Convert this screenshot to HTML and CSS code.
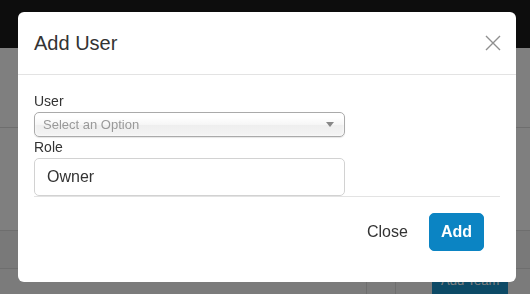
FILE: index.html
```html
<!DOCTYPE html>
<html lang="en">
<head>
<meta charset="utf-8">
<title>Add User</title>
<link rel="stylesheet" href="styles.css">
</head>
<body>
<div class="page">
  <header class="navbar"></header>
  <section class="band band-top"></section>
  <section class="band band-mid"></section>
  <section class="band band-sub"></section>
  <section class="band band-table">
    <div class="cell cell-wide"></div>
    <div class="cell cell-narrow"></div>
    <div class="cell cell-action">
      <button class="btn-team" type="button">Add Team</button>
    </div>
  </section>
</div>

<div class="backdrop"></div>

<div class="modal" role="dialog" aria-labelledby="modal-title">
  <div class="modal-header">
    <h5 class="modal-title" id="modal-title">Add User</h5>
    <button class="modal-close" type="button" aria-label="Close">
      <svg viewBox="0 0 16 16" width="16" height="16" aria-hidden="true">
        <path d="M1 1 L15 15 M15 1 L1 15" />
      </svg>
    </button>
  </div>
  <div class="modal-body">
    <div class="form-col">
      <label class="field-label">User</label>
      <div class="chosen-single">
        <span class="chosen-placeholder">Select an Option</span>
        <span class="chosen-arrow"></span>
      </div>
      <label class="field-label">Role</label>
      <div class="text-input">Owner</div>
    </div>
    <hr class="divider">
  </div>
  <div class="modal-footer">
    <button class="btn btn-plain" type="button">Close</button>
    <button class="btn btn-primary" type="button">Add</button>
  </div>
</div>
</body>
</html>
```

FILE: styles.css
```css
* { box-sizing: border-box; }

html, body {
  margin: 0;
  padding: 0;
}

body {
  font-family: "Liberation Sans", Arial, sans-serif;
  color: #333;
  background: #ffffff;
  width: 530px;
  height: 294px;
  overflow: hidden;
}

/* ---------- background page ---------- */
.page {
  display: flex;
  flex-direction: column;
}

.navbar {
  height: 48px;
  background: #1a1a1a;
}

.band {
  border-bottom: 1px solid #dcdcdc;
}

.band-top { height: 80px; background: #ffffff; }
.band-mid { height: 103px; background: #ffffff; }
.band-sub { height: 38px; background: #f3f3f3; }

.band-table {
  display: flex;
  height: 25px;
  border-bottom: none;
  background: #f7f7f7;
}

.cell { height: 100%; }
.cell-wide { width: 366px; }
.cell-narrow {
  width: 30px;
  border-left: 1px solid #dcdcdc;
  border-right: 1px solid #dcdcdc;
}
.cell-action {
  flex: 1;
  display: flex;
  justify-content: flex-start;
  padding-left: 36px;
}

.btn-team {
  height: 25px;
  padding: 0 9px 1px;
  line-height: 24px;
  font-family: "Liberation Sans", Arial, sans-serif;
  font-size: 13px;
  color: #ffffff;
  background: #1a94cc;
  border: none;
  border-radius: 4px 4px 0 0;
}

.backdrop {
  position: fixed;
  inset: 0;
  background: rgba(0, 0, 0, 0.5);
}

/* ---------- modal ---------- */
.modal {
  position: fixed;
  top: 12px;
  left: 18px;
  width: 498px;
  background: #ffffff;
  border-radius: 6px;
  display: flex;
  flex-direction: column;
}

.modal-header {
  display: flex;
  align-items: center;
  justify-content: space-between;
  padding: 16px 15px 16px 16px;
  border-bottom: 1px solid #e3e3e3;
}

.modal-title {
  margin: 0;
  font-size: 20px;
  line-height: 30px;
  font-weight: normal;
  color: #333;
}

.modal-close {
  display: flex;
  padding: 0;
  border: none;
  background: none;
  width: 16px;
  height: 16px;
}

.modal-close svg path {
  stroke: #8f8f8f;
  stroke-width: 1.4;
  fill: none;
}

.modal-body {
  padding: 16px 16px 0;
}

.form-col {
  width: 311px;
  display: flex;
  flex-direction: column;
}

.field-label {
  display: block;
  font-size: 14px;
  line-height: 21px;
  color: #333;
}

.chosen-single {
  display: flex;
  align-items: center;
  justify-content: space-between;
  height: 25px;
  padding: 0 0 0 8px;
  border: 1px solid #aaaaaa;
  border-radius: 5px;
  background: linear-gradient(#ffffff 20%, #f6f6f6 50%, #eeeeee 52%, #f4f4f4 100%);
  box-shadow: inset 0 0 3px #ffffff, 0 1px 1px rgba(0, 0, 0, 0.1);
  font-size: 13px;
  line-height: 23px;
}

.chosen-placeholder {
  color: #999999;
}

.chosen-arrow {
  width: 0;
  height: 0;
  margin-right: 10px;
  border-left: 4px solid transparent;
  border-right: 4px solid transparent;
  border-top: 5px solid #888888;
}

.text-input {
  height: 38px;
  padding: 0 12px;
  border: 1px solid #d2d2d2;
  border-radius: 5px;
  font-size: 16px;
  line-height: 36px;
  color: #333;
}

.divider {
  margin: 0;
  border: none;
  border-top: 1px solid #e3e3e3;
  height: 0;
}

.modal-footer {
  display: flex;
  justify-content: flex-end;
  align-items: center;
  gap: 8px;
  padding: 16px 32px 31px 16px;
}

.btn {
  height: 38px;
  padding: 0 11px;
  border: 1px solid transparent;
  border-radius: 5px;
  font-family: "Liberation Sans", Arial, sans-serif;
  font-size: 16px;
  line-height: 36px;
  background: none;
}

.btn-plain {
  color: #333;
  padding: 0 12px;
}

.btn-primary {
  background: #0b84c3;
  border-color: #0b84c3;
  color: #ffffff;
  font-weight: bold;
}
```
